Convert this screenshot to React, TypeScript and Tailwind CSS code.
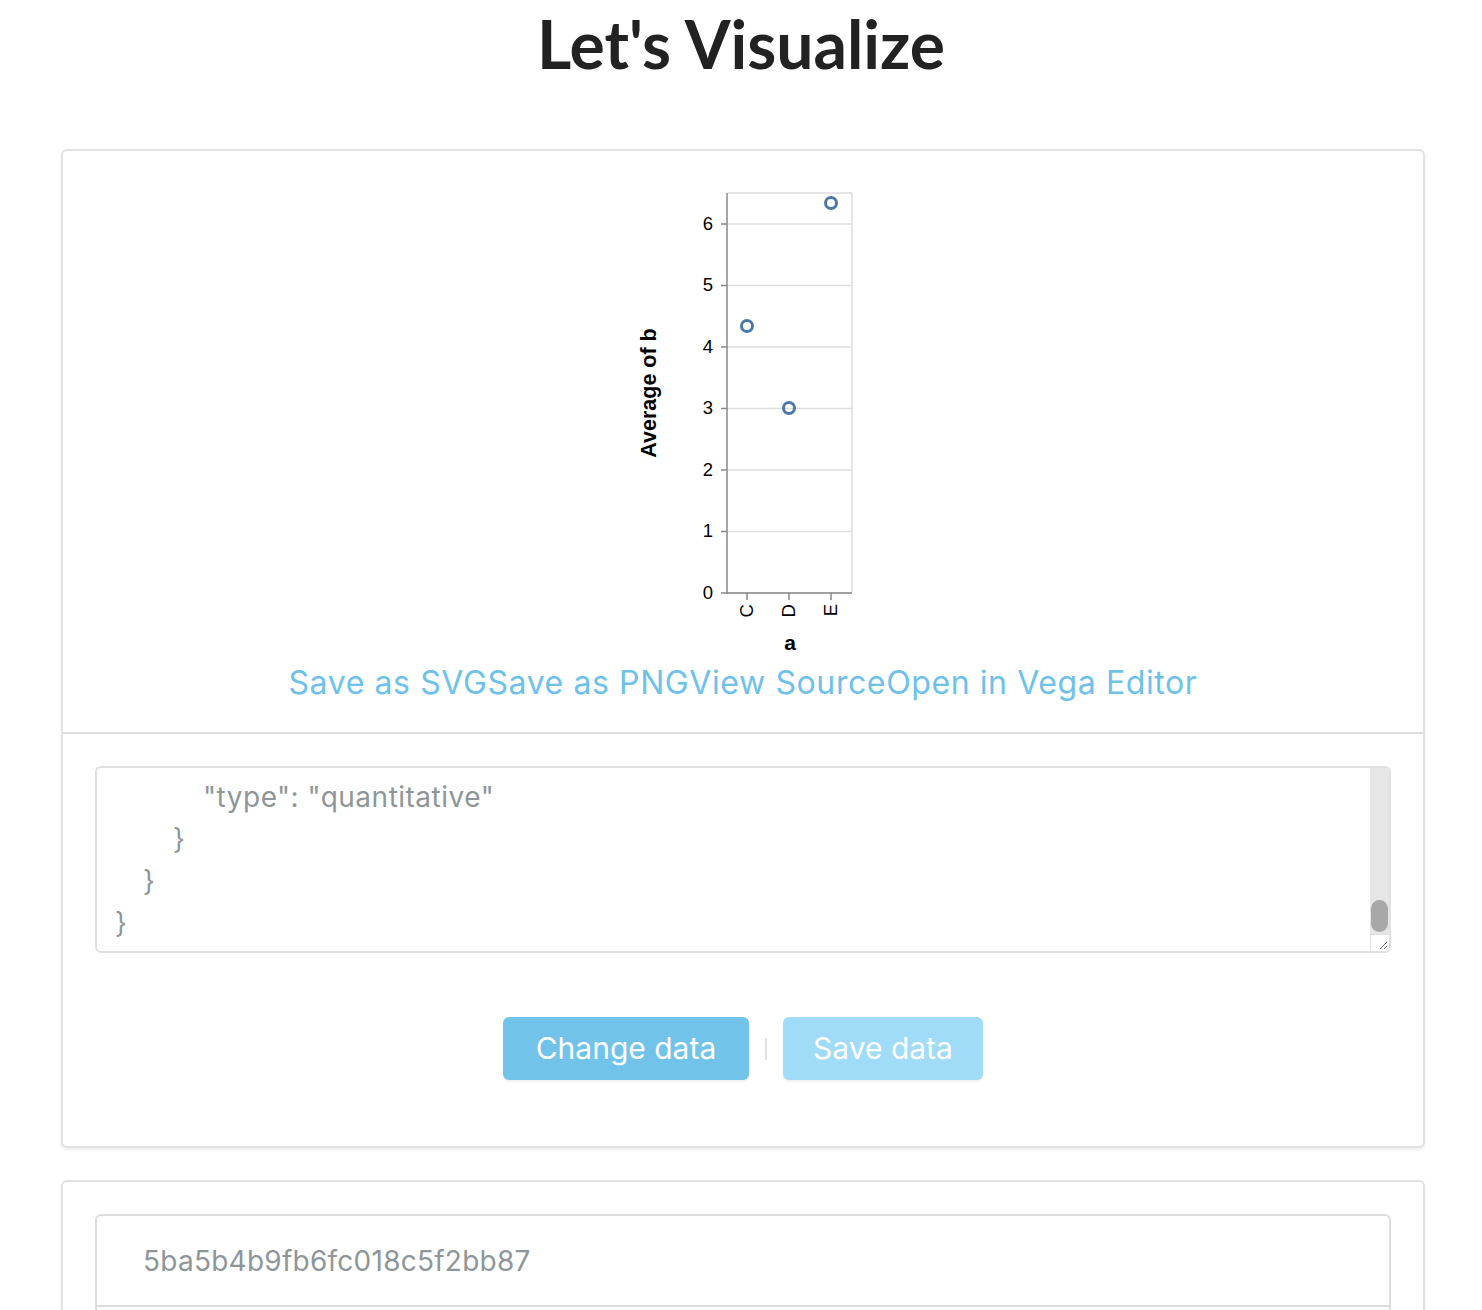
import React from "react";

const mont = { fontFamily: "Inter, 'Noto Sans', sans-serif" };

function Chart() {
  const grid = [407, 345.5, 284, 222.5, 161, 99.5, 38];
  const bands = [
    { x: 119, label: "C" },
    { x: 161, label: "D" },
    { x: 203, label: "E" },
  ];
  const pts = [
    { x: 119, y: 140 },
    { x: 161, y: 222 },
    { x: 203, y: 17 },
  ];
  return (
    <svg width="230" height="470" viewBox="0 0 230 470" style={{ fontFamily: "'Liberation Sans', Arial, sans-serif" }}>
      {grid.map((y, i) => (
        <line key={i} x1="99" x2="224" y1={y} y2={y} stroke="#dddddd" strokeWidth="1.5" />
      ))}
      <line x1="99" x2="224" y1="7" y2="7" stroke="#dddddd" strokeWidth="1.5" />
      <line x1="224" x2="224" y1="7" y2="407" stroke="#dddddd" strokeWidth="1.5" />
      <line x1="99" x2="99" y1="7" y2="408" stroke="#888888" strokeWidth="1.5" />
      <line x1="98" x2="224" y1="407" y2="407" stroke="#888888" strokeWidth="1.5" />
      {grid.map((y, i) => (
        <g key={i}>
          <line x1="93" x2="99" y1={y} y2={y} stroke="#888888" strokeWidth="1.5" />
          <text x="85" y={y + 1} textAnchor="end" dominantBaseline="middle" fontSize="18.5" fill="#000">
            {i}
          </text>
        </g>
      ))}
      {bands.map((b) => (
        <g key={b.label}>
          <line x1={b.x} x2={b.x} y1="407" y2="414" stroke="#888888" strokeWidth="1.5" />
          <text
            x={b.x + 1}
            y="418"
            transform={`rotate(-90 ${b.x + 1} 418)`}
            textAnchor="end"
            dominantBaseline="middle"
            fontSize="18.5"
            fill="#000"
          >
            {b.label}
          </text>
        </g>
      ))}
      {pts.map((p, i) => (
        <circle key={i} cx={p.x} cy={p.y} r="5.5" fill="none" stroke="#4c78a8" strokeWidth="3" />
      ))}
      <text x="162" y="464" textAnchor="middle" fontSize="21" fontWeight="bold" fill="#000">
        a
      </text>
      <text
        x="28"
        y="207"
        transform="rotate(-90 28 207)"
        textAnchor="middle"
        fontSize="21.5"
        fontWeight="bold"
        fill="#000"
      >
        Average of b
      </text>
    </svg>
  );
}

export default function App() {
  const lines = [
    { indent: 88, text: '"type": "quantitative"' },
    { indent: 58, text: "}" },
    { indent: 28, text: "}" },
    { indent: 0, text: "}" },
  ];
  return (
    <div className="min-h-[1500px] bg-white">
      <h1
        className="pt-[11px] text-center text-[66px] font-bold leading-none text-[#222222]"
        style={{ fontFamily: "Lato, sans-serif" }}
      >
        Let's Visualize
      </h1>

      <div className="ml-[61px] mt-[72px] w-[1364px] rounded-md border-2 border-[#e2e2e2] bg-white shadow-[0_2px_3px_rgba(0,0,0,0.08)]">
        <div className="flex h-[581px] flex-col items-center pt-[35px]">
          <Chart />
          <div className="mt-[7px] flex text-[32px] leading-[40px] tracking-[0.6px] text-[#6ec1ea]" style={mont}>
            <span>Save as SVG</span>
            <span>Save as PNG</span>
            <span>View Source</span>
            <span>Open in Vega Editor</span>
          </div>
        </div>
        <div className="h-[2px] bg-[#dddddd]" />
        <div className="px-[32px] pb-[66px] pt-[32px]">
          <div className="flex h-[187px] overflow-hidden rounded-md border-2 border-[#e0e0e0]">
            <div
              className="flex-1 pl-[18px] pt-[8px] text-[28px] leading-[42px] tracking-[0.5px] text-[#8e9699]"
              style={mont}
            >
              {lines.map((l, i) => (
                <div key={i} style={{ paddingLeft: l.indent }} className="whitespace-pre">
                  {l.text}
                </div>
              ))}
            </div>
            <div className="flex w-[19px] flex-col">
              <div className="flex flex-1 flex-col justify-end bg-[#e6e6e6] px-[1px] pb-[2px]">
                <div className="h-[32px] rounded-full bg-[#a8a8a8]" />
              </div>
              <div className="flex h-[17px] items-end justify-end border-l border-t border-[#e0e0e0] bg-white pb-[1px] pr-[1px]">
                <svg width="10" height="10" viewBox="0 0 10 10">
                  <line x1="2" y1="9" x2="9" y2="2" stroke="#777" strokeWidth="1" />
                  <line x1="6" y1="9" x2="9" y2="6" stroke="#777" strokeWidth="1" />
                </svg>
              </div>
            </div>
          </div>
          <div className="mt-[64px] flex items-center justify-center gap-[16px]" style={mont}>
            <button className="h-[63px] w-[246px] rounded-[6px] bg-[#71c3e9] text-[30px] text-white shadow-[0_2px_2px_rgba(0,0,0,0.06)]">
              Change data
            </button>
            <div className="h-[22px] w-[2px] bg-[#e2e2e2]" />
            <button className="h-[63px] w-[200px] rounded-[6px] bg-[#a0dcf7] text-[30px] text-white shadow-[0_2px_2px_rgba(0,0,0,0.06)]">
              Save data
            </button>
          </div>
        </div>
      </div>

      <div className="ml-[61px] mt-[32px] w-[1364px] rounded-md border-2 border-[#e2e2e2] bg-white px-[32px] pb-[32px] pt-[32px] shadow-[0_2px_3px_rgba(0,0,0,0.08)]">
        <div className="rounded-md border-2 border-[#dddddd]">
          <div
            className="flex h-[89px] items-center pl-[46px] text-[28px] tracking-[0.25px] text-[#8e9699]"
            style={mont}
          >
            5ba5b4b9fb6fc018c5f2bb87
          </div>
          <div className="h-[2px] bg-[#dddddd]" />
          <div className="h-[89px]" />
        </div>
      </div>
    </div>
  );
}
